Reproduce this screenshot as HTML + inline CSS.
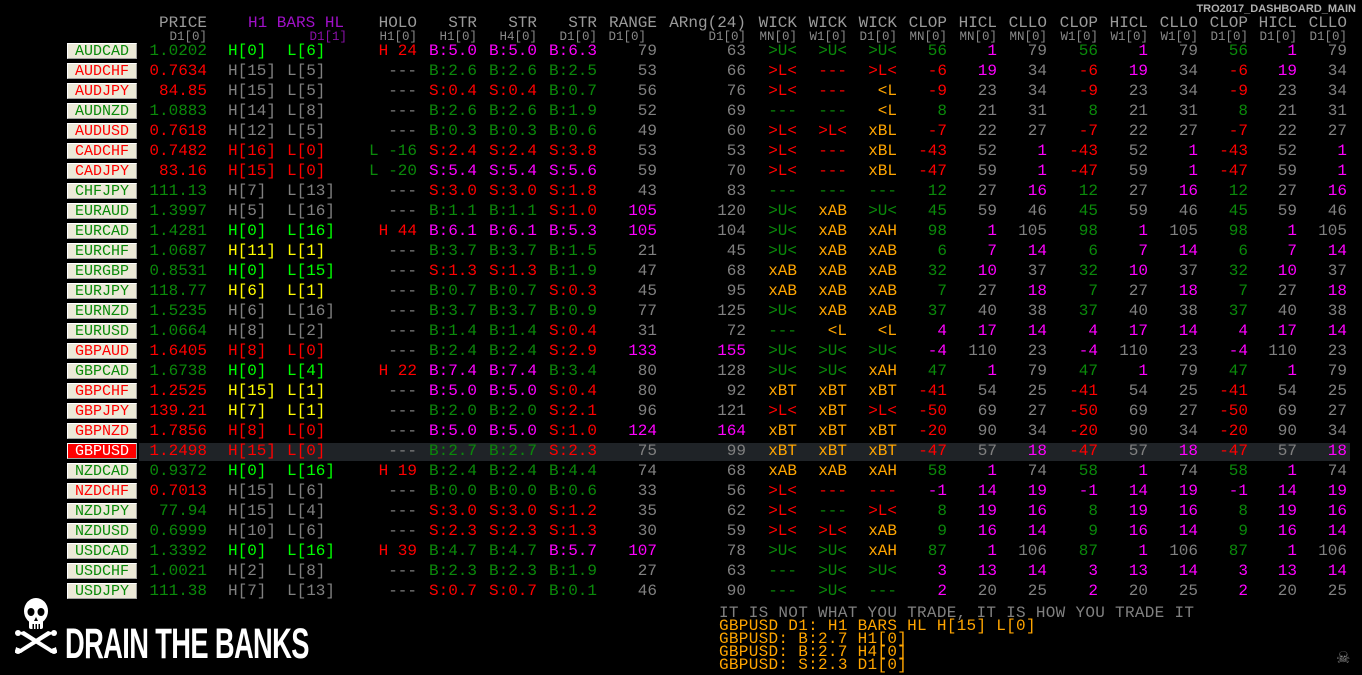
<!DOCTYPE html>
<html><head><meta charset="utf-8">
<style>
html,body{margin:0;padding:0;background:#000;}
body{width:1362px;height:675px;position:relative;overflow:hidden;font-family:"Liberation Mono",monospace;font-size:16px;}
.R{position:absolute;left:0;width:1362px;height:16px;line-height:17px;}
.R i{position:absolute;font-style:normal;white-space:pre;top:0;}
.bt{position:absolute;left:67px;top:0;width:68px;height:14px;line-height:15px;background:#ece9d8;border-top:1px solid #fff;border-left:1px solid #fff;border-bottom:1px solid #a0a0a0;border-right:1px solid #a0a0a0;text-align:center;font-weight:normal;font-size:15px;}
.bt.sel{background:#ff0000;color:#fff;}
.p{right:1155px}.hl{left:228px}.ll{left:287px}.ho{right:945px}
.s1{right:885px}.s2{right:825px}.s3{right:765px}.rg{right:705px}.ar{right:616px}
.w1{right:565px}.w2{right:515px}.w3{right:465px}
.a1{right:415px}.b1{right:365px}.c1{right:315px}
.a2{right:264px}.b2{right:214px}.c2{right:164px}
.a3{right:114px}.b3{right:65px}.c3{right:15px}
.g{color:#0a8a0a}.G{color:#00ff00}.r{color:#ff0000}.m{color:#ff00ff}.y{color:#ffff00}.o{color:#ffa500}.x{color:#808080}
.H{position:absolute;white-space:pre;line-height:14px;color:#9a9a9a;}
.h1{top:16px;font-size:16px;}
.h2{top:30px;font-size:12.5px;color:#8a8a8a;}
.pu{color:#a010c8}.pd{color:#8a10a8}
.hi{position:absolute;left:139px;top:443px;width:1211px;height:18px;background:#1f2327;}
.bot{position:absolute;left:719px;font-size:16px;line-height:13px;white-space:pre;letter-spacing:0.3px;}
</style></head><body>
<div style="position:absolute;right:6px;top:3px;font-family:'Liberation Sans',sans-serif;font-weight:bold;font-size:11px;color:#b0b0b0;">TRO2017_DASHBOARD_MAIN</div>

<div class="H h1" style="right:1155px">PRICE</div>
<div class="H h2" style="right:1155px">D1[0]</div>
<div class="H h1 pu" style="left:248px">H1 BARS HL</div>
<div class="H h2 pd" style="right:1015px">D1[1]</div>
<div class="H h1" style="right:945px">HOLO</div><div class="H h2" style="right:945px">H1[0]</div>
<div class="H h1" style="right:885px">STR</div><div class="H h2" style="right:885px">H1[0]</div>
<div class="H h1" style="right:825px">STR</div><div class="H h2" style="right:825px">H4[0]</div>
<div class="H h1" style="right:765px">STR</div><div class="H h2" style="right:765px">D1[0]</div>
<div class="H h1" style="right:705px">RANGE</div><div class="H h2" style="right:716px">D1[0]</div>
<div class="H h1" style="right:616px">ARng(24)</div><div class="H h2" style="right:616px">D1[0]</div>
<div class="H h1" style="right:565px">WICK</div><div class="H h2" style="right:565px">MN[0]</div>
<div class="H h1" style="right:515px">WICK</div><div class="H h2" style="right:515px">W1[0]</div>
<div class="H h1" style="right:465px">WICK</div><div class="H h2" style="right:465px">D1[0]</div>
<div class="H h1" style="right:415px">CLOP</div><div class="H h2" style="right:415px">MN[0]</div>
<div class="H h1" style="right:365px">HICL</div><div class="H h2" style="right:365px">MN[0]</div>
<div class="H h1" style="right:315px">CLLO</div><div class="H h2" style="right:315px">MN[0]</div>
<div class="H h1" style="right:264px">CLOP</div><div class="H h2" style="right:264px">W1[0]</div>
<div class="H h1" style="right:214px">HICL</div><div class="H h2" style="right:214px">W1[0]</div>
<div class="H h1" style="right:164px">CLLO</div><div class="H h2" style="right:164px">W1[0]</div>
<div class="H h1" style="right:114px">CLOP</div><div class="H h2" style="right:114px">D1[0]</div>
<div class="H h1" style="right:65px">HICL</div><div class="H h2" style="right:65px">D1[0]</div>
<div class="H h1" style="right:15px">CLLO</div><div class="H h2" style="right:15px">D1[0]</div>

<div class="hi"></div>

<div class="R" style="top:43px"><b class="bt g">AUDCAD</b><i class="p g">1.0202</i><i class="hl G">H[0]</i><i class="ll G">L[6]</i><i class="ho r">H 24</i><i class="s1 m">B:5.0</i><i class="s2 m">B:5.0</i><i class="s3 m">B:6.3</i><i class="rg x">79</i><i class="ar x">63</i><i class="w1 g">&gt;U&lt;</i><i class="w2 g">&gt;U&lt;</i><i class="w3 g">&gt;U&lt;</i><i class="a1 g">56</i><i class="b1 m">1</i><i class="c1 x">79</i><i class="a2 g">56</i><i class="b2 m">1</i><i class="c2 x">79</i><i class="a3 g">56</i><i class="b3 m">1</i><i class="c3 x">79</i></div>
<div class="R" style="top:63px"><b class="bt r">AUDCHF</b><i class="p r">0.7634</i><i class="hl x">H[15]</i><i class="ll x">L[5]</i><i class="ho x">---</i><i class="s1 g">B:2.6</i><i class="s2 g">B:2.6</i><i class="s3 g">B:2.5</i><i class="rg x">53</i><i class="ar x">66</i><i class="w1 r">&gt;L&lt;</i><i class="w2 r">---</i><i class="w3 r">&gt;L&lt;</i><i class="a1 r">-6</i><i class="b1 m">19</i><i class="c1 x">34</i><i class="a2 r">-6</i><i class="b2 m">19</i><i class="c2 x">34</i><i class="a3 r">-6</i><i class="b3 m">19</i><i class="c3 x">34</i></div>
<div class="R" style="top:83px"><b class="bt r">AUDJPY</b><i class="p r">84.85</i><i class="hl x">H[15]</i><i class="ll x">L[5]</i><i class="ho x">---</i><i class="s1 r">S:0.4</i><i class="s2 r">S:0.4</i><i class="s3 g">B:0.7</i><i class="rg x">56</i><i class="ar x">76</i><i class="w1 r">&gt;L&lt;</i><i class="w2 r">---</i><i class="w3 o">&lt;L</i><i class="a1 r">-9</i><i class="b1 x">23</i><i class="c1 x">34</i><i class="a2 r">-9</i><i class="b2 x">23</i><i class="c2 x">34</i><i class="a3 r">-9</i><i class="b3 x">23</i><i class="c3 x">34</i></div>
<div class="R" style="top:103px"><b class="bt g">AUDNZD</b><i class="p g">1.0883</i><i class="hl x">H[14]</i><i class="ll x">L[8]</i><i class="ho x">---</i><i class="s1 g">B:2.6</i><i class="s2 g">B:2.6</i><i class="s3 g">B:1.9</i><i class="rg x">52</i><i class="ar x">69</i><i class="w1 g">---</i><i class="w2 g">---</i><i class="w3 o">&lt;L</i><i class="a1 g">8</i><i class="b1 x">21</i><i class="c1 x">31</i><i class="a2 g">8</i><i class="b2 x">21</i><i class="c2 x">31</i><i class="a3 g">8</i><i class="b3 x">21</i><i class="c3 x">31</i></div>
<div class="R" style="top:123px"><b class="bt r">AUDUSD</b><i class="p r">0.7618</i><i class="hl x">H[12]</i><i class="ll x">L[5]</i><i class="ho x">---</i><i class="s1 g">B:0.3</i><i class="s2 g">B:0.3</i><i class="s3 g">B:0.6</i><i class="rg x">49</i><i class="ar x">60</i><i class="w1 r">&gt;L&lt;</i><i class="w2 r">&gt;L&lt;</i><i class="w3 o">xBL</i><i class="a1 r">-7</i><i class="b1 x">22</i><i class="c1 x">27</i><i class="a2 r">-7</i><i class="b2 x">22</i><i class="c2 x">27</i><i class="a3 r">-7</i><i class="b3 x">22</i><i class="c3 x">27</i></div>
<div class="R" style="top:143px"><b class="bt r">CADCHF</b><i class="p r">0.7482</i><i class="hl r">H[16]</i><i class="ll r">L[0]</i><i class="ho g">L -16</i><i class="s1 r">S:2.4</i><i class="s2 r">S:2.4</i><i class="s3 r">S:3.8</i><i class="rg x">53</i><i class="ar x">53</i><i class="w1 r">&gt;L&lt;</i><i class="w2 r">---</i><i class="w3 o">xBL</i><i class="a1 r">-43</i><i class="b1 x">52</i><i class="c1 m">1</i><i class="a2 r">-43</i><i class="b2 x">52</i><i class="c2 m">1</i><i class="a3 r">-43</i><i class="b3 x">52</i><i class="c3 m">1</i></div>
<div class="R" style="top:163px"><b class="bt r">CADJPY</b><i class="p r">83.16</i><i class="hl r">H[15]</i><i class="ll r">L[0]</i><i class="ho g">L -20</i><i class="s1 m">S:5.4</i><i class="s2 m">S:5.4</i><i class="s3 m">S:5.6</i><i class="rg x">59</i><i class="ar x">70</i><i class="w1 r">&gt;L&lt;</i><i class="w2 r">---</i><i class="w3 o">xBL</i><i class="a1 r">-47</i><i class="b1 x">59</i><i class="c1 m">1</i><i class="a2 r">-47</i><i class="b2 x">59</i><i class="c2 m">1</i><i class="a3 r">-47</i><i class="b3 x">59</i><i class="c3 m">1</i></div>
<div class="R" style="top:183px"><b class="bt g">CHFJPY</b><i class="p g">111.13</i><i class="hl x">H[7]</i><i class="ll x">L[13]</i><i class="ho x">---</i><i class="s1 r">S:3.0</i><i class="s2 r">S:3.0</i><i class="s3 r">S:1.8</i><i class="rg x">43</i><i class="ar x">83</i><i class="w1 g">---</i><i class="w2 g">---</i><i class="w3 g">---</i><i class="a1 g">12</i><i class="b1 x">27</i><i class="c1 m">16</i><i class="a2 g">12</i><i class="b2 x">27</i><i class="c2 m">16</i><i class="a3 g">12</i><i class="b3 x">27</i><i class="c3 m">16</i></div>
<div class="R" style="top:203px"><b class="bt g">EURAUD</b><i class="p g">1.3997</i><i class="hl x">H[5]</i><i class="ll x">L[16]</i><i class="ho x">---</i><i class="s1 g">B:1.1</i><i class="s2 g">B:1.1</i><i class="s3 r">S:1.0</i><i class="rg m">105</i><i class="ar x">120</i><i class="w1 g">&gt;U&lt;</i><i class="w2 o">xAB</i><i class="w3 g">&gt;U&lt;</i><i class="a1 g">45</i><i class="b1 x">59</i><i class="c1 x">46</i><i class="a2 g">45</i><i class="b2 x">59</i><i class="c2 x">46</i><i class="a3 g">45</i><i class="b3 x">59</i><i class="c3 x">46</i></div>
<div class="R" style="top:223px"><b class="bt g">EURCAD</b><i class="p g">1.4281</i><i class="hl G">H[0]</i><i class="ll G">L[16]</i><i class="ho r">H 44</i><i class="s1 m">B:6.1</i><i class="s2 m">B:6.1</i><i class="s3 m">B:5.3</i><i class="rg m">105</i><i class="ar x">104</i><i class="w1 g">&gt;U&lt;</i><i class="w2 o">xAB</i><i class="w3 o">xAH</i><i class="a1 g">98</i><i class="b1 m">1</i><i class="c1 x">105</i><i class="a2 g">98</i><i class="b2 m">1</i><i class="c2 x">105</i><i class="a3 g">98</i><i class="b3 m">1</i><i class="c3 x">105</i></div>
<div class="R" style="top:243px"><b class="bt g">EURCHF</b><i class="p g">1.0687</i><i class="hl y">H[11]</i><i class="ll y">L[1]</i><i class="ho x">---</i><i class="s1 g">B:3.7</i><i class="s2 g">B:3.7</i><i class="s3 g">B:1.5</i><i class="rg x">21</i><i class="ar x">45</i><i class="w1 g">&gt;U&lt;</i><i class="w2 o">xAB</i><i class="w3 o">xAB</i><i class="a1 g">6</i><i class="b1 m">7</i><i class="c1 m">14</i><i class="a2 g">6</i><i class="b2 m">7</i><i class="c2 m">14</i><i class="a3 g">6</i><i class="b3 m">7</i><i class="c3 m">14</i></div>
<div class="R" style="top:263px"><b class="bt g">EURGBP</b><i class="p g">0.8531</i><i class="hl G">H[0]</i><i class="ll G">L[15]</i><i class="ho x">---</i><i class="s1 r">S:1.3</i><i class="s2 r">S:1.3</i><i class="s3 g">B:1.9</i><i class="rg x">47</i><i class="ar x">68</i><i class="w1 o">xAB</i><i class="w2 o">xAB</i><i class="w3 o">xAB</i><i class="a1 g">32</i><i class="b1 m">10</i><i class="c1 x">37</i><i class="a2 g">32</i><i class="b2 m">10</i><i class="c2 x">37</i><i class="a3 g">32</i><i class="b3 m">10</i><i class="c3 x">37</i></div>
<div class="R" style="top:283px"><b class="bt g">EURJPY</b><i class="p g">118.77</i><i class="hl y">H[6]</i><i class="ll y">L[1]</i><i class="ho x">---</i><i class="s1 g">B:0.7</i><i class="s2 g">B:0.7</i><i class="s3 r">S:0.3</i><i class="rg x">45</i><i class="ar x">95</i><i class="w1 o">xAB</i><i class="w2 o">xAB</i><i class="w3 o">xAB</i><i class="a1 g">7</i><i class="b1 x">27</i><i class="c1 m">18</i><i class="a2 g">7</i><i class="b2 x">27</i><i class="c2 m">18</i><i class="a3 g">7</i><i class="b3 x">27</i><i class="c3 m">18</i></div>
<div class="R" style="top:303px"><b class="bt g">EURNZD</b><i class="p g">1.5235</i><i class="hl x">H[6]</i><i class="ll x">L[16]</i><i class="ho x">---</i><i class="s1 g">B:3.7</i><i class="s2 g">B:3.7</i><i class="s3 g">B:0.9</i><i class="rg x">77</i><i class="ar x">125</i><i class="w1 g">&gt;U&lt;</i><i class="w2 o">xAB</i><i class="w3 o">xAB</i><i class="a1 g">37</i><i class="b1 x">40</i><i class="c1 x">38</i><i class="a2 g">37</i><i class="b2 x">40</i><i class="c2 x">38</i><i class="a3 g">37</i><i class="b3 x">40</i><i class="c3 x">38</i></div>
<div class="R" style="top:323px"><b class="bt g">EURUSD</b><i class="p g">1.0664</i><i class="hl x">H[8]</i><i class="ll x">L[2]</i><i class="ho x">---</i><i class="s1 g">B:1.4</i><i class="s2 g">B:1.4</i><i class="s3 r">S:0.4</i><i class="rg x">31</i><i class="ar x">72</i><i class="w1 g">---</i><i class="w2 o">&lt;L</i><i class="w3 o">&lt;L</i><i class="a1 m">4</i><i class="b1 m">17</i><i class="c1 m">14</i><i class="a2 m">4</i><i class="b2 m">17</i><i class="c2 m">14</i><i class="a3 m">4</i><i class="b3 m">17</i><i class="c3 m">14</i></div>
<div class="R" style="top:343px"><b class="bt r">GBPAUD</b><i class="p r">1.6405</i><i class="hl r">H[8]</i><i class="ll r">L[0]</i><i class="ho x">---</i><i class="s1 g">B:2.4</i><i class="s2 g">B:2.4</i><i class="s3 r">S:2.9</i><i class="rg m">133</i><i class="ar m">155</i><i class="w1 g">&gt;U&lt;</i><i class="w2 g">&gt;U&lt;</i><i class="w3 g">&gt;U&lt;</i><i class="a1 m">-4</i><i class="b1 x">110</i><i class="c1 x">23</i><i class="a2 m">-4</i><i class="b2 x">110</i><i class="c2 x">23</i><i class="a3 m">-4</i><i class="b3 x">110</i><i class="c3 x">23</i></div>
<div class="R" style="top:363px"><b class="bt g">GBPCAD</b><i class="p g">1.6738</i><i class="hl G">H[0]</i><i class="ll G">L[4]</i><i class="ho r">H 22</i><i class="s1 m">B:7.4</i><i class="s2 m">B:7.4</i><i class="s3 g">B:3.4</i><i class="rg x">80</i><i class="ar x">128</i><i class="w1 g">&gt;U&lt;</i><i class="w2 g">&gt;U&lt;</i><i class="w3 o">xAH</i><i class="a1 g">47</i><i class="b1 m">1</i><i class="c1 x">79</i><i class="a2 g">47</i><i class="b2 m">1</i><i class="c2 x">79</i><i class="a3 g">47</i><i class="b3 m">1</i><i class="c3 x">79</i></div>
<div class="R" style="top:383px"><b class="bt r">GBPCHF</b><i class="p r">1.2525</i><i class="hl y">H[15]</i><i class="ll y">L[1]</i><i class="ho x">---</i><i class="s1 m">B:5.0</i><i class="s2 m">B:5.0</i><i class="s3 r">S:0.4</i><i class="rg x">80</i><i class="ar x">92</i><i class="w1 o">xBT</i><i class="w2 o">xBT</i><i class="w3 o">xBT</i><i class="a1 r">-41</i><i class="b1 x">54</i><i class="c1 x">25</i><i class="a2 r">-41</i><i class="b2 x">54</i><i class="c2 x">25</i><i class="a3 r">-41</i><i class="b3 x">54</i><i class="c3 x">25</i></div>
<div class="R" style="top:403px"><b class="bt r">GBPJPY</b><i class="p r">139.21</i><i class="hl y">H[7]</i><i class="ll y">L[1]</i><i class="ho x">---</i><i class="s1 g">B:2.0</i><i class="s2 g">B:2.0</i><i class="s3 r">S:2.1</i><i class="rg x">96</i><i class="ar x">121</i><i class="w1 r">&gt;L&lt;</i><i class="w2 o">xBT</i><i class="w3 r">&gt;L&lt;</i><i class="a1 r">-50</i><i class="b1 x">69</i><i class="c1 x">27</i><i class="a2 r">-50</i><i class="b2 x">69</i><i class="c2 x">27</i><i class="a3 r">-50</i><i class="b3 x">69</i><i class="c3 x">27</i></div>
<div class="R" style="top:423px"><b class="bt r">GBPNZD</b><i class="p r">1.7856</i><i class="hl r">H[8]</i><i class="ll r">L[0]</i><i class="ho x">---</i><i class="s1 m">B:5.0</i><i class="s2 m">B:5.0</i><i class="s3 r">S:1.0</i><i class="rg m">124</i><i class="ar m">164</i><i class="w1 o">xBT</i><i class="w2 o">xBT</i><i class="w3 o">xBT</i><i class="a1 r">-20</i><i class="b1 x">90</i><i class="c1 x">34</i><i class="a2 r">-20</i><i class="b2 x">90</i><i class="c2 x">34</i><i class="a3 r">-20</i><i class="b3 x">90</i><i class="c3 x">34</i></div>
<div class="R" style="top:443px"><b class="bt sel">GBPUSD</b><i class="p r">1.2498</i><i class="hl r">H[15]</i><i class="ll r">L[0]</i><i class="ho x">---</i><i class="s1 g">B:2.7</i><i class="s2 g">B:2.7</i><i class="s3 r">S:2.3</i><i class="rg x">75</i><i class="ar x">99</i><i class="w1 o">xBT</i><i class="w2 o">xBT</i><i class="w3 o">xBT</i><i class="a1 r">-47</i><i class="b1 x">57</i><i class="c1 m">18</i><i class="a2 r">-47</i><i class="b2 x">57</i><i class="c2 m">18</i><i class="a3 r">-47</i><i class="b3 x">57</i><i class="c3 m">18</i></div>
<div class="R" style="top:463px"><b class="bt g">NZDCAD</b><i class="p g">0.9372</i><i class="hl G">H[0]</i><i class="ll G">L[16]</i><i class="ho r">H 19</i><i class="s1 g">B:2.4</i><i class="s2 g">B:2.4</i><i class="s3 g">B:4.4</i><i class="rg x">74</i><i class="ar x">68</i><i class="w1 o">xAB</i><i class="w2 o">xAB</i><i class="w3 o">xAH</i><i class="a1 g">58</i><i class="b1 m">1</i><i class="c1 x">74</i><i class="a2 g">58</i><i class="b2 m">1</i><i class="c2 x">74</i><i class="a3 g">58</i><i class="b3 m">1</i><i class="c3 x">74</i></div>
<div class="R" style="top:483px"><b class="bt r">NZDCHF</b><i class="p r">0.7013</i><i class="hl x">H[15]</i><i class="ll x">L[6]</i><i class="ho x">---</i><i class="s1 g">B:0.0</i><i class="s2 g">B:0.0</i><i class="s3 g">B:0.6</i><i class="rg x">33</i><i class="ar x">56</i><i class="w1 r">&gt;L&lt;</i><i class="w2 r">---</i><i class="w3 r">---</i><i class="a1 m">-1</i><i class="b1 m">14</i><i class="c1 m">19</i><i class="a2 m">-1</i><i class="b2 m">14</i><i class="c2 m">19</i><i class="a3 m">-1</i><i class="b3 m">14</i><i class="c3 m">19</i></div>
<div class="R" style="top:503px"><b class="bt g">NZDJPY</b><i class="p g">77.94</i><i class="hl x">H[15]</i><i class="ll x">L[4]</i><i class="ho x">---</i><i class="s1 r">S:3.0</i><i class="s2 r">S:3.0</i><i class="s3 r">S:1.2</i><i class="rg x">35</i><i class="ar x">62</i><i class="w1 r">&gt;L&lt;</i><i class="w2 g">---</i><i class="w3 r">&gt;L&lt;</i><i class="a1 g">8</i><i class="b1 m">19</i><i class="c1 m">16</i><i class="a2 g">8</i><i class="b2 m">19</i><i class="c2 m">16</i><i class="a3 g">8</i><i class="b3 m">19</i><i class="c3 m">16</i></div>
<div class="R" style="top:523px"><b class="bt g">NZDUSD</b><i class="p g">0.6999</i><i class="hl x">H[10]</i><i class="ll x">L[6]</i><i class="ho x">---</i><i class="s1 r">S:2.3</i><i class="s2 r">S:2.3</i><i class="s3 r">S:1.3</i><i class="rg x">30</i><i class="ar x">59</i><i class="w1 r">&gt;L&lt;</i><i class="w2 r">&gt;L&lt;</i><i class="w3 o">xAB</i><i class="a1 g">9</i><i class="b1 m">16</i><i class="c1 m">14</i><i class="a2 g">9</i><i class="b2 m">16</i><i class="c2 m">14</i><i class="a3 g">9</i><i class="b3 m">16</i><i class="c3 m">14</i></div>
<div class="R" style="top:543px"><b class="bt g">USDCAD</b><i class="p g">1.3392</i><i class="hl G">H[0]</i><i class="ll G">L[16]</i><i class="ho r">H 39</i><i class="s1 g">B:4.7</i><i class="s2 g">B:4.7</i><i class="s3 m">B:5.7</i><i class="rg m">107</i><i class="ar x">78</i><i class="w1 g">&gt;U&lt;</i><i class="w2 g">&gt;U&lt;</i><i class="w3 o">xAH</i><i class="a1 g">87</i><i class="b1 m">1</i><i class="c1 x">106</i><i class="a2 g">87</i><i class="b2 m">1</i><i class="c2 x">106</i><i class="a3 g">87</i><i class="b3 m">1</i><i class="c3 x">106</i></div>
<div class="R" style="top:563px"><b class="bt g">USDCHF</b><i class="p g">1.0021</i><i class="hl x">H[2]</i><i class="ll x">L[8]</i><i class="ho x">---</i><i class="s1 g">B:2.3</i><i class="s2 g">B:2.3</i><i class="s3 g">B:1.9</i><i class="rg x">27</i><i class="ar x">63</i><i class="w1 g">---</i><i class="w2 g">&gt;U&lt;</i><i class="w3 g">&gt;U&lt;</i><i class="a1 m">3</i><i class="b1 m">13</i><i class="c1 m">14</i><i class="a2 m">3</i><i class="b2 m">13</i><i class="c2 m">14</i><i class="a3 m">3</i><i class="b3 m">13</i><i class="c3 m">14</i></div>
<div class="R" style="top:583px"><b class="bt g">USDJPY</b><i class="p g">111.38</i><i class="hl x">H[7]</i><i class="ll x">L[13]</i><i class="ho x">---</i><i class="s1 r">S:0.7</i><i class="s2 r">S:0.7</i><i class="s3 g">B:0.1</i><i class="rg x">46</i><i class="ar x">90</i><i class="w1 g">---</i><i class="w2 g">&gt;U&lt;</i><i class="w3 g">---</i><i class="a1 m">2</i><i class="b1 x">20</i><i class="c1 x">25</i><i class="a2 m">2</i><i class="b2 x">20</i><i class="c2 x">25</i><i class="a3 m">2</i><i class="b3 x">20</i><i class="c3 x">25</i></div>

<div class="bot" style="top:607px;color:#808080">IT IS NOT WHAT YOU TRADE, IT IS HOW YOU TRADE IT</div>
<div class="bot o" style="top:620px">GBPUSD D1: H1 BARS HL H[15] L[0]</div>
<div class="bot o" style="top:633px">GBPUSD: B:2.7 H1[0]</div>
<div class="bot o" style="top:646px">GBPUSD: B:2.7 H4[0]</div>
<div class="bot o" style="top:659px">GBPUSD: S:2.3 D1[0]</div>

<svg style="position:absolute;left:14px;top:597px" width="44" height="60" viewBox="0 0 44 60">
  <g fill="#fff">
    <ellipse cx="22" cy="14" rx="12" ry="13"/>
    <rect x="15" y="22" width="14" height="10" rx="2"/>
    <path d="M4 36 L10 34 L38 52 L42 50 L43 56 L37 56 L34 54 L8 38 Z"/>
    <path d="M40 36 L34 34 L6 52 L2 50 L1 56 L7 56 L10 54 L36 38 Z"/>
    <circle cx="4" cy="36" r="3"/><circle cx="40" cy="36" r="3"/>
    <circle cx="4" cy="54" r="3"/><circle cx="40" cy="54" r="3"/>
  </g>
  <g fill="#000">
    <ellipse cx="17" cy="15" rx="3.5" ry="4"/>
    <ellipse cx="27" cy="15" rx="3.5" ry="4"/>
    <path d="M22 20 L20 24 L24 24 Z"/>
    <rect x="18.5" y="27" width="1.5" height="5"/><rect x="21.5" y="27" width="1.5" height="5"/><rect x="24.5" y="27" width="1.5" height="5"/>
  </g>
</svg>
<div style="position:absolute;left:65px;top:623px;font-family:'Liberation Sans Narrow','Liberation Sans',sans-serif;font-weight:bold;font-size:43px;line-height:42px;color:#fff;transform-origin:0 0;transform:scaleX(0.635);white-space:nowrap;letter-spacing:-1px;">DRAIN THE BANKS</div>
<div style="position:absolute;left:1336px;top:648px;color:#8a8a8a;font-size:16px;font-family:'DejaVu Sans',sans-serif;">☠</div>
</body></html>
